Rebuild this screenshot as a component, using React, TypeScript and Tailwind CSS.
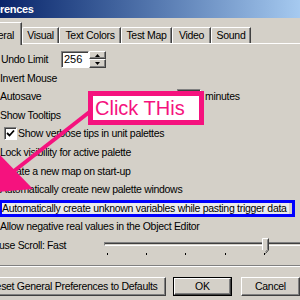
import React from "react";

const raised =
  "border border-t-white border-l-white border-r-[#404040] border-b-[#404040] shadow-[inset_-1px_-1px_0_#808080]";
const sunken =
  "border border-t-[#808080] border-l-[#808080] border-r-white border-b-white shadow-[inset_1px_1px_0_#404040]";

const Tab = ({ label, w }: { label: string; w: string }) => (
  <div
    className={`${w} h-[16px] flex items-center justify-center border-t border-l border-t-white border-l-white border-r border-r-[#404040] shadow-[inset_-1px_0_0_#808080] rounded-tl-[2px]`}
  >
    {label}
  </div>
);

const Row = ({ h, children }: { h: string; children: React.ReactNode }) => (
  <div className={`${h} flex items-center whitespace-nowrap`}>{children}</div>
);

export default function App() {
  const ticks = [3, 42, 81, 121, 160];

  return (
    <div className="relative w-[300px] h-[300px] overflow-hidden bg-[#d4d0c8] text-black font-['Liberation_Sans',Arial,sans-serif] text-[10.5px] tracking-[-0.3px] select-none">
      {/* Title bar */}
      <div className="h-[18px] flex items-center bg-gradient-to-r from-[#0a246a] to-[#a6caf0] whitespace-nowrap">
        <span className="ml-[-26px] text-white font-bold text-[11px]">Preferences</span>
      </div>

      {/* Tabs */}
      <div className="h-[25px] flex items-end whitespace-nowrap">
        <div className="relative z-10 ml-[-38px] w-[60px] h-[23px] mb-[-2px] flex items-start justify-end pt-[5px] pr-[7px] bg-[#d4d0c8] border-t border-l border-t-white border-l-white border-r border-r-[#404040] shadow-[inset_-1px_0_0_#808080]">
          General
        </div>
        <Tab label="Visual" w="w-[37px]" />
        <Tab label="Text Colors" w="w-[62px]" />
        <Tab label="Test Map" w="w-[51px]" />
        <Tab label="Video" w="w-[39px]" />
        <Tab label="Sound" w="w-[40px]" />
      </div>

      {/* Panel */}
      <div className="border-t border-white pt-[7px]">
        <Row h="h-[18px]">
          <span className="w-[61px] pl-[1px]">Undo Limit</span>
          <div className={`self-start w-[28px] h-[17px] bg-white ${sunken} flex items-center pl-[2px] text-[11px] tracking-normal`}>
            256
          </div>
          <div className="self-start w-[17px] h-[17px] flex flex-col">
            <div className={`h-[8px] bg-[#d4d0c8] ${raised} flex items-center justify-center`}>
              <svg width="5" height="3" viewBox="0 0 5 3">
                <polygon points="2.5,0 5,3 0,3" fill="#000" />
              </svg>
            </div>
            <div className={`h-[9px] bg-[#d4d0c8] ${raised} flex items-center justify-center`}>
              <svg width="5" height="3" viewBox="0 0 5 3">
                <polygon points="0,0 5,0 2.5,3" fill="#000" />
              </svg>
            </div>
          </div>
        </Row>
        <Row h="h-[19px]">
          <span>Invert Mouse</span>
        </Row>
        <Row h="h-[18px]">
          <span className="w-[177px]">Autosave</span>
          <div className={`self-start mt-[1px] w-[24px] h-[17px] bg-white ${sunken}`} />
          <span className="ml-[4px]">minutes</span>
        </Row>
        <Row h="h-[19px]">
          <span>Show Tooltips</span>
        </Row>
        <Row h="h-[17px]">
          <div className={`ml-[4px] w-[13px] h-[13px] bg-white ${sunken} flex items-center justify-center`}>
            <svg width="9" height="9" viewBox="0 0 9 9">
              <polyline points="1,4 3.5,6.5 8,1.5" fill="none" stroke="#000" strokeWidth="1.8" />
            </svg>
          </div>
          <span className="ml-[1px]">Show verbose tips in unit palettes</span>
        </Row>
        <Row h="h-[21px]">
          <span>Lock visibility for active palette</span>
        </Row>
        <Row h="h-[18px]">
          <span>Create a new map on start-up</span>
        </Row>
        <Row h="h-[18px]">
          <span>Automatically create new palette windows</span>
        </Row>
        <div className="mt-[1px] ml-[-1px] w-[296px] h-[17px] border-[3px] border-[#0000ff] flex items-center whitespace-nowrap">
          <span className="bg-[#ebebeb] pr-[2px] leading-[11px]">
            Automatically create unknown variables while pasting trigger data
          </span>
        </div>
        <Row h="h-[19px]">
          <span>Allow negative real values in the Object Editor</span>
        </Row>
        <div className="h-[20px] flex items-center whitespace-nowrap">
          <span className="ml-[-15px] w-[62px]">Mouse Scroll:</span>
          <span className="w-[57px]">Fast</span>
          <div className="relative self-stretch flex-1">
            <div className="absolute left-0 right-[-20px] top-[6px] h-[4px] border-t border-l border-t-[#808080] border-l-[#808080] border-b border-b-white shadow-[inset_0_1px_0_#404040]" />
            <svg className="absolute left-[158px] top-[2px]" width="7" height="16" viewBox="0 0 7 16">
              <polygon points="0.5,0.5 6.5,0.5 6.5,12 3.5,15 0.5,12" fill="#d4d0c8" />
              <polyline points="0.5,12 0.5,0.5 6.5,0.5" fill="none" stroke="#fff" />
              <polyline points="6.5,0.5 6.5,12 3.5,15.5" fill="none" stroke="#404040" />
              <polyline points="5.5,1.5 5.5,11.5 3.5,14" fill="none" stroke="#808080" />
            </svg>
            {ticks.map((x) => (
              <div key={x} className="absolute top-[17px] w-[1px] h-[2px] bg-black" style={{ left: x }} />
            ))}
          </div>
        </div>

        {/* Separator */}
        <div className="mt-[9px] border-t border-t-[#808080] border-b border-b-white" />

        {/* Buttons */}
        <div className="mt-[10px] flex items-start whitespace-nowrap">
          <div className={`ml-[-20px] w-[205px] h-[19px] ${raised} flex items-center justify-center`}>
            Reset General Preferences to Defaults
          </div>
          <div className="ml-[7px] w-[65px] h-[19px] border border-black">
            <div className={`h-full ${raised} flex items-center justify-center`}>OK</div>
          </div>
          <div className={`ml-[9px] w-[65px] h-[19px] ${raised} flex items-center justify-center`}>
            Cancel
          </div>
        </div>
      </div>

      {/* Annotation arrow */}
      <svg className="absolute left-0 top-0 pointer-events-none" width="300" height="300" viewBox="0 0 300 300">
        <line x1="92" y1="110" x2="14" y2="171" stroke="#f5127e" strokeWidth="4" />
        <polygon points="-3,152 33,189 -14,193" fill="#f5127e" />
      </svg>

      {/* Annotation box */}
      <div className="absolute left-[88px] top-[91px] w-[116px] h-[34px] border-[5px] border-[#f5127e] bg-white flex items-center pl-[2px]">
        <span className="text-[#f5127e] text-[20px] leading-none tracking-normal">Click THis</span>
      </div>
    </div>
  );
}
